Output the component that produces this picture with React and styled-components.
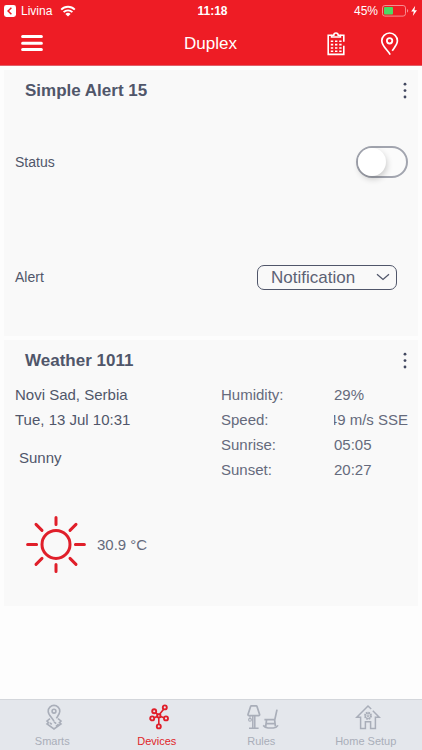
import { useState } from "react";
import styled, { createGlobalStyle } from "styled-components";

const red = "#ee1c25";
const ink = "#50566a";

const GlobalStyle = createGlobalStyle`
  * { box-sizing: border-box; }
  body {
    margin: 0;
    background: #fdfdfd;
    color: ${ink};
    font-family: "Liberation Sans", Arial, sans-serif;
  }
  button {
    margin: 0;
    padding: 0;
    border: 0;
    background: none;
    color: inherit;
    font: inherit;
    cursor: pointer;
  }
  svg { display: block; flex: none; }
`;

const WifiIcon = () => (
  <svg width="16" height="12" viewBox="0 0 16 12" fill="none" stroke="#fff" strokeWidth="1.9">
    <path d="M1.2 4.6a9.6 9.6 0 0 1 13.6 0" />
    <path d="M3.6 7.2a6.2 6.2 0 0 1 8.8 0" />
    <path d="M8 11.6 5.4 9a3.7 3.7 0 0 1 5.2 0z" fill="#fff" stroke="none" />
  </svg>
);

const BackIcon = () => (
  <svg width="12" height="12" viewBox="0 0 12 12">
    <rect width="12" height="12" rx="2.4" fill="#fff" />
    <path d="M7.4 2.8 4.1 6l3.3 3.2" fill="none" stroke={red} strokeWidth="1.5" />
  </svg>
);

const BatteryIcon = () => (
  <svg width="36" height="12" viewBox="0 0 36 12">
    <rect x="0.5" y="0.5" width="23" height="10.6" rx="2.4" fill="none" stroke="#f68d92" />
    <rect x="2" y="2" width="9" height="7.6" rx="0.8" fill="#4cd964" />
    <path d="M25 4v3.6q1.2-.4 1.2-1.8T25 4z" fill="#f68d92" />
    <path d="M33.2.8 29.2 6.6h2.6L30.8 11l4.2-5.8h-2.6z" fill="#fff" />
  </svg>
);

const MenuIcon = () => (
  <svg width="22" height="18" viewBox="0 0 22 18" stroke="#fff" strokeWidth="3" strokeLinecap="round">
    <path d="M1.6 1.6h18.8M1.6 8.2h18.8M1.6 14.6h18.8" />
  </svg>
);

const ClipboardIcon = () => (
  <svg width="20" height="24" viewBox="0 0 20 24" fill="none" stroke="#fff" strokeWidth="1.6">
    <path d="M5.4 3.2H2.2v19.2h15.6v-8.6M14.4 3.2h3.4v6.6" />
    <path d="M5.6 5V3.2h2.2a2.2 2.2 0 0 1 4.4 0h2.2V5z" />
    <path
      d="M4.8 9.2h10.8M4.8 12.6h10.8M4.8 16h10.8M4.8 19.2h10.8"
      strokeDasharray="2.4 1.8"
      strokeWidth="1.6"
    />
  </svg>
);

const PinIcon = () => (
  <svg width="20" height="24" viewBox="0 0 20 24" fill="none" stroke="#fff" strokeWidth="1.7">
    <path d="M10.2 22.6C8 18.4 1.8 14.2 1.8 8.8a7.8 7.8 0 0 1 15.6 0c0 3.6-2.9 6.6-5.2 10" />
    <circle cx="9.6" cy="8.8" r="2.7" strokeWidth="1.8" />
  </svg>
);

const DotsIcon = () => (
  <svg width="4" height="18" viewBox="0 0 4 18" fill="#424860">
    <circle cx="2" cy="2.2" r="1.4" />
    <circle cx="2" cy="8.6" r="1.4" />
    <circle cx="2" cy="15" r="1.4" />
  </svg>
);

const ChevronIcon = () => (
  <svg width="14" height="8" viewBox="0 0 14 8" fill="none" stroke={ink} strokeWidth="1.3">
    <path d="M1 1.2l6 5.2 6-5.2" />
  </svg>
);

const SunIcon = () => (
  <svg width="60" height="60" viewBox="0 0 60 60" fill="none" stroke="#e01f2a" strokeWidth="3" strokeLinecap="round">
    <circle cx="30" cy="30.4" r="14" />
    <path d="M30 3.4v7M30 50.4v7M1.6 30.4h9M49.4 30.4h9M10 10.4l6 6M44 44.4l6 6M50 10.4l-6 6M16 44.4l-6 6" />
  </svg>
);

const SmartsIcon = () => (
  <svg width="18" height="26" viewBox="0 0 18 26" fill="none" stroke="currentColor" strokeWidth="1.6">
    <path d="M9 17.4C7 13.4 3.2 11 3.2 7.2a5.8 5.8 0 0 1 11.6 0c0 2.6-1.8 4.6-3.4 7.2" />
    <circle cx="9" cy="7.2" r="1.9" />
    <path d="M5 14.6 2 17l1.6 1.6L2 20l7 5 7-5-1.6-1.4L16 17l-3-2.4" />
    <path d="M5 19l1.8 1.4M9 17.8l2.2 1.8M11 22.4l2.6-2.2" />
  </svg>
);

const DevicesIcon = () => (
  <svg width="20" height="26" viewBox="0 0 20 26" fill="none" stroke="currentColor" strokeWidth="1.9">
    <circle cx="15.8" cy="3.4" r="2" />
    <circle cx="5.2" cy="7.2" r="2" />
    <circle cx="3.2" cy="14.4" r="2" />
    <circle cx="17" cy="14.4" r="2" />
    <circle cx="9.8" cy="22.4" r="2" />
    <rect x="8.2" y="10.2" width="3.2" height="3.2" rx="0.6" />
    <path d="M10.8 10l3.8-4.8M6.6 8.6l1.8 1.6M5.2 13.8l2.8-1.2M11.6 12.4l3.4 1.4M9.8 13.6v6.6" strokeWidth="1.6" />
  </svg>
);

const RulesIcon = () => (
  <svg width="32" height="26" viewBox="0 0 32 26" fill="none" stroke="currentColor" strokeWidth="1.7">
    <path d="M4.4 1.8h4.8q.6 0 .8.6l2.6 8q.2 1.2-1 1.2H2q-1.2 0-1-1.2l2.6-8q.2-.6.8-.6z" />
    <path d="M5.8 11.6V24M7.8 11.6V24M2 24.2h9.6" strokeWidth="1.5" />
    <path d="M3 11.6V14" strokeWidth="1" />
    <circle cx="3" cy="15.8" r="1.4" strokeWidth="1.1" />
    <path d="M30 5.6 27.8 15.6H17.4M19.6 15.6l-1 7.2M27.6 15.6l.8 6.8M19.2 19.6h8.8" />
    <path d="M16.2 21.4q2 2.4 4.8 2.6h5.4q3-.2 4.6-2.6" />
  </svg>
);

const HomeIcon = () => (
  <svg width="26" height="26" viewBox="0 0 26 26" fill="none" stroke="currentColor" strokeWidth="1.5">
    <path d="M16.2 5 13 2 1.8 13.2h3.8v11.2h4.8v-6.6h5.2v6.6h4.8V13.2h3.8L17.8 6.8" />
    <circle cx="13" cy="11.8" r="3.2" strokeWidth="1.6" strokeDasharray="1.7 .8" />
    <circle cx="13" cy="11.8" r="2.7" strokeWidth="1" />
    <circle cx="13" cy="11.8" r="1" strokeWidth="1" />
  </svg>
);

const tabs = [
  { name: "Smarts", icon: <SmartsIcon /> },
  { name: "Devices", icon: <DevicesIcon /> },
  { name: "Rules", icon: <RulesIcon /> },
  { name: "Home Setup", icon: <HomeIcon /> },
];

const readings = [
  { label: "Humidity:", value: "29%" },
  { label: "Speed:", value: "49 m/s SSE", clipped: true },
  { label: "Sunrise:", value: "05:05" },
  { label: "Sunset:", value: "20:27" },
];

const DeviceCard = ({ title, children }) => (
  <SCard>
    <SCardHead>
      <STitle>{title}</STitle>
      <button aria-label={`${title} options`}>
        <DotsIcon />
      </button>
    </SCardHead>
    {children}
  </SCard>
);

export default function App() {
  const [tab, setTab] = useState("Devices");
  const [on, setOn] = useState(false);

  return (
    <SPage>
      <GlobalStyle />
      <SHeader>
        <SStatusBar>
          <SBack>
            <BackIcon />
            Livina
            <WifiIcon />
          </SBack>
          <STime>11:18</STime>
          <SBattery>
            45%
            <BatteryIcon />
          </SBattery>
        </SStatusBar>
        <SNavBar>
          <SMenu aria-label="Menu">
            <MenuIcon />
          </SMenu>
          <SHeading>Duplex</SHeading>
          <SActions>
            <button aria-label="Log">
              <ClipboardIcon />
            </button>
            <button aria-label="Location">
              <PinIcon />
            </button>
          </SActions>
        </SNavBar>
      </SHeader>

      <SMain>
        <DeviceCard title="Simple Alert 15">
          <SSettings>
            <SSetting>
              <label htmlFor="status">Status</label>
              <SSwitch
                id="status"
                type="checkbox"
                checked={on}
                onChange={(e) => setOn(e.target.checked)}
              />
            </SSetting>
            <SSetting>
              <label htmlFor="alert">Alert</label>
              <SSelectBox>
                <SSelect id="alert" defaultValue="Notification">
                  <option>Notification</option>
                  <option>Email</option>
                </SSelect>
                <ChevronIcon />
              </SSelectBox>
            </SSetting>
          </SSettings>
        </DeviceCard>

        <DeviceCard title="Weather 1011">
          <SWeather>
            <SPlace>
              <span>Novi Sad, Serbia</span>
              <span>Tue, 13 Jul 10:31</span>
              <SSky>Sunny</SSky>
            </SPlace>
            <SReadings>
              {readings.map((r) => (
                <SReading key={r.label}>
                  <dt>{r.label}</dt>
                  <SValue $clipped={r.clipped}>{r.value}</SValue>
                </SReading>
              ))}
            </SReadings>
          </SWeather>
          <STemperature>
            <SunIcon />
            30.9 °C
          </STemperature>
        </DeviceCard>
      </SMain>

      <STabBar>
        {tabs.map((t) => (
          <STab key={t.name} $active={t.name === tab} onClick={() => setTab(t.name)}>
            {t.icon}
            {t.name}
          </STab>
        ))}
      </STabBar>
    </SPage>
  );
}

const SPage = styled.div`
  display: flex;
  flex-direction: column;
  min-height: 100vh;
`;

const SHeader = styled.header`
  background: ${red};
  border-bottom: 1px solid #e0606a;
  color: #fff;
`;

const SStatusBar = styled.div`
  display: grid;
  grid-template-columns: 1fr auto 1fr;
  align-items: center;
  height: 22px;
  padding: 0 4px;
  font-size: 12px;
`;

const SBack = styled.button`
  display: flex;
  align-items: center;
  gap: 5px;

  svg:last-child {
    margin-left: 3px;
  }
`;

const STime = styled.span`
  margin-left: 3px;
  font-weight: 700;
`;

const SBattery = styled.span`
  display: flex;
  align-items: center;
  justify-content: flex-end;
  gap: 4px;
`;

const SNavBar = styled.div`
  display: grid;
  grid-template-columns: 1fr auto 1fr;
  align-items: center;
  height: 43px;
  padding: 0 22px 0 21px;
`;

const SMenu = styled.button`
  justify-self: start;
`;

const SHeading = styled.h1`
  margin: 0;
  font-size: 17px;
  font-weight: 400;
`;

const SActions = styled.div`
  display: flex;
  justify-content: flex-end;
  gap: 34px;
`;

const SMain = styled.main`
  display: flex;
  flex: 1;
  flex-direction: column;
  gap: 4px;
  padding: 4px;
`;

const SCard = styled.section`
  background: #f9f9f9;
`;

const SCardHead = styled.div`
  display: flex;
  align-items: center;
  justify-content: space-between;
  height: 42px;
  padding: 0 11px 0 21px;
`;

const STitle = styled.h2`
  margin: 0;
  font-size: 17px;
  font-weight: 700;
`;

const SSettings = styled.div`
  display: flex;
  flex-direction: column;
  gap: 15px;
  padding: 0 10px 9px 11px;
  font-size: 14px;
`;

const SSetting = styled.div`
  display: flex;
  align-items: center;
  justify-content: space-between;
  height: 100px;
`;

const SSwitch = styled.input`
  display: flex;
  align-items: center;
  width: 52px;
  height: 32px;
  margin: 0;
  appearance: none;
  border: 2px solid #a2a5af;
  border-radius: 16px;
  background: ${(p) => (p.checked ? red : "#fbfbfb")};
  cursor: pointer;

  &::before {
    content: "";
    width: 28px;
    height: 28px;
    margin-left: ${(p) => (p.checked ? "20px" : "0")};
    border-radius: 50%;
    background: #fff;
    box-shadow: 1px 3px 6px rgba(0, 0, 0, 0.2);
  }
`;

const SSelectBox = styled.div`
  display: grid;
  align-items: center;
  width: 140px;
  margin-right: 11px;

  > * {
    grid-area: 1 / 1;
  }

  svg {
    justify-self: end;
    margin-right: 7px;
    pointer-events: none;
  }
`;

const SSelect = styled.select`
  width: 100%;
  height: 25px;
  padding: 0 24px 0 13px;
  appearance: none;
  border: 1px solid ${ink};
  border-radius: 7px;
  background: transparent;
  color: #5c6275;
  font-family: inherit;
  font-size: 17px;
`;

const SWeather = styled.div`
  display: flex;
  justify-content: space-between;
  padding: 0 10px 0 11px;
  font-size: 15px;
  line-height: 25px;
`;

const SPlace = styled.div`
  display: flex;
  flex-direction: column;
`;

const SSky = styled.span`
  padding: 13px 4px 0;
`;

const SReadings = styled.dl`
  margin: 0;
  color: #656a7c;
`;

const SReading = styled.div`
  display: grid;
  grid-template-columns: 113px 74px;
`;

const SValue = styled.dd`
  display: flex;
  justify-content: ${(p) => (p.$clipped ? "flex-end" : "flex-start")};
  margin: 0;
  overflow: hidden;
  white-space: nowrap;
`;

const STemperature = styled.div`
  display: flex;
  align-items: center;
  gap: 11px;
  padding: 32px 22px;
  color: #656a7c;
  font-size: 15px;
`;

const STabBar = styled.nav`
  position: sticky;
  bottom: 0;
  display: grid;
  grid-template-columns: repeat(4, 1fr);
  height: 51px;
  padding-right: 4px;
  border-top: 1px solid #d3d6db;
  background: #e4e7ec;
`;

const STab = styled.button`
  display: flex;
  flex-direction: column;
  align-items: center;
  gap: 5px;
  padding-top: 4px;
  color: ${(p) => (p.$active ? "#e01f2a" : "#a9aeb9")};
  font-size: 11px;

  svg {
    margin-left: 4px;
  }
`;
